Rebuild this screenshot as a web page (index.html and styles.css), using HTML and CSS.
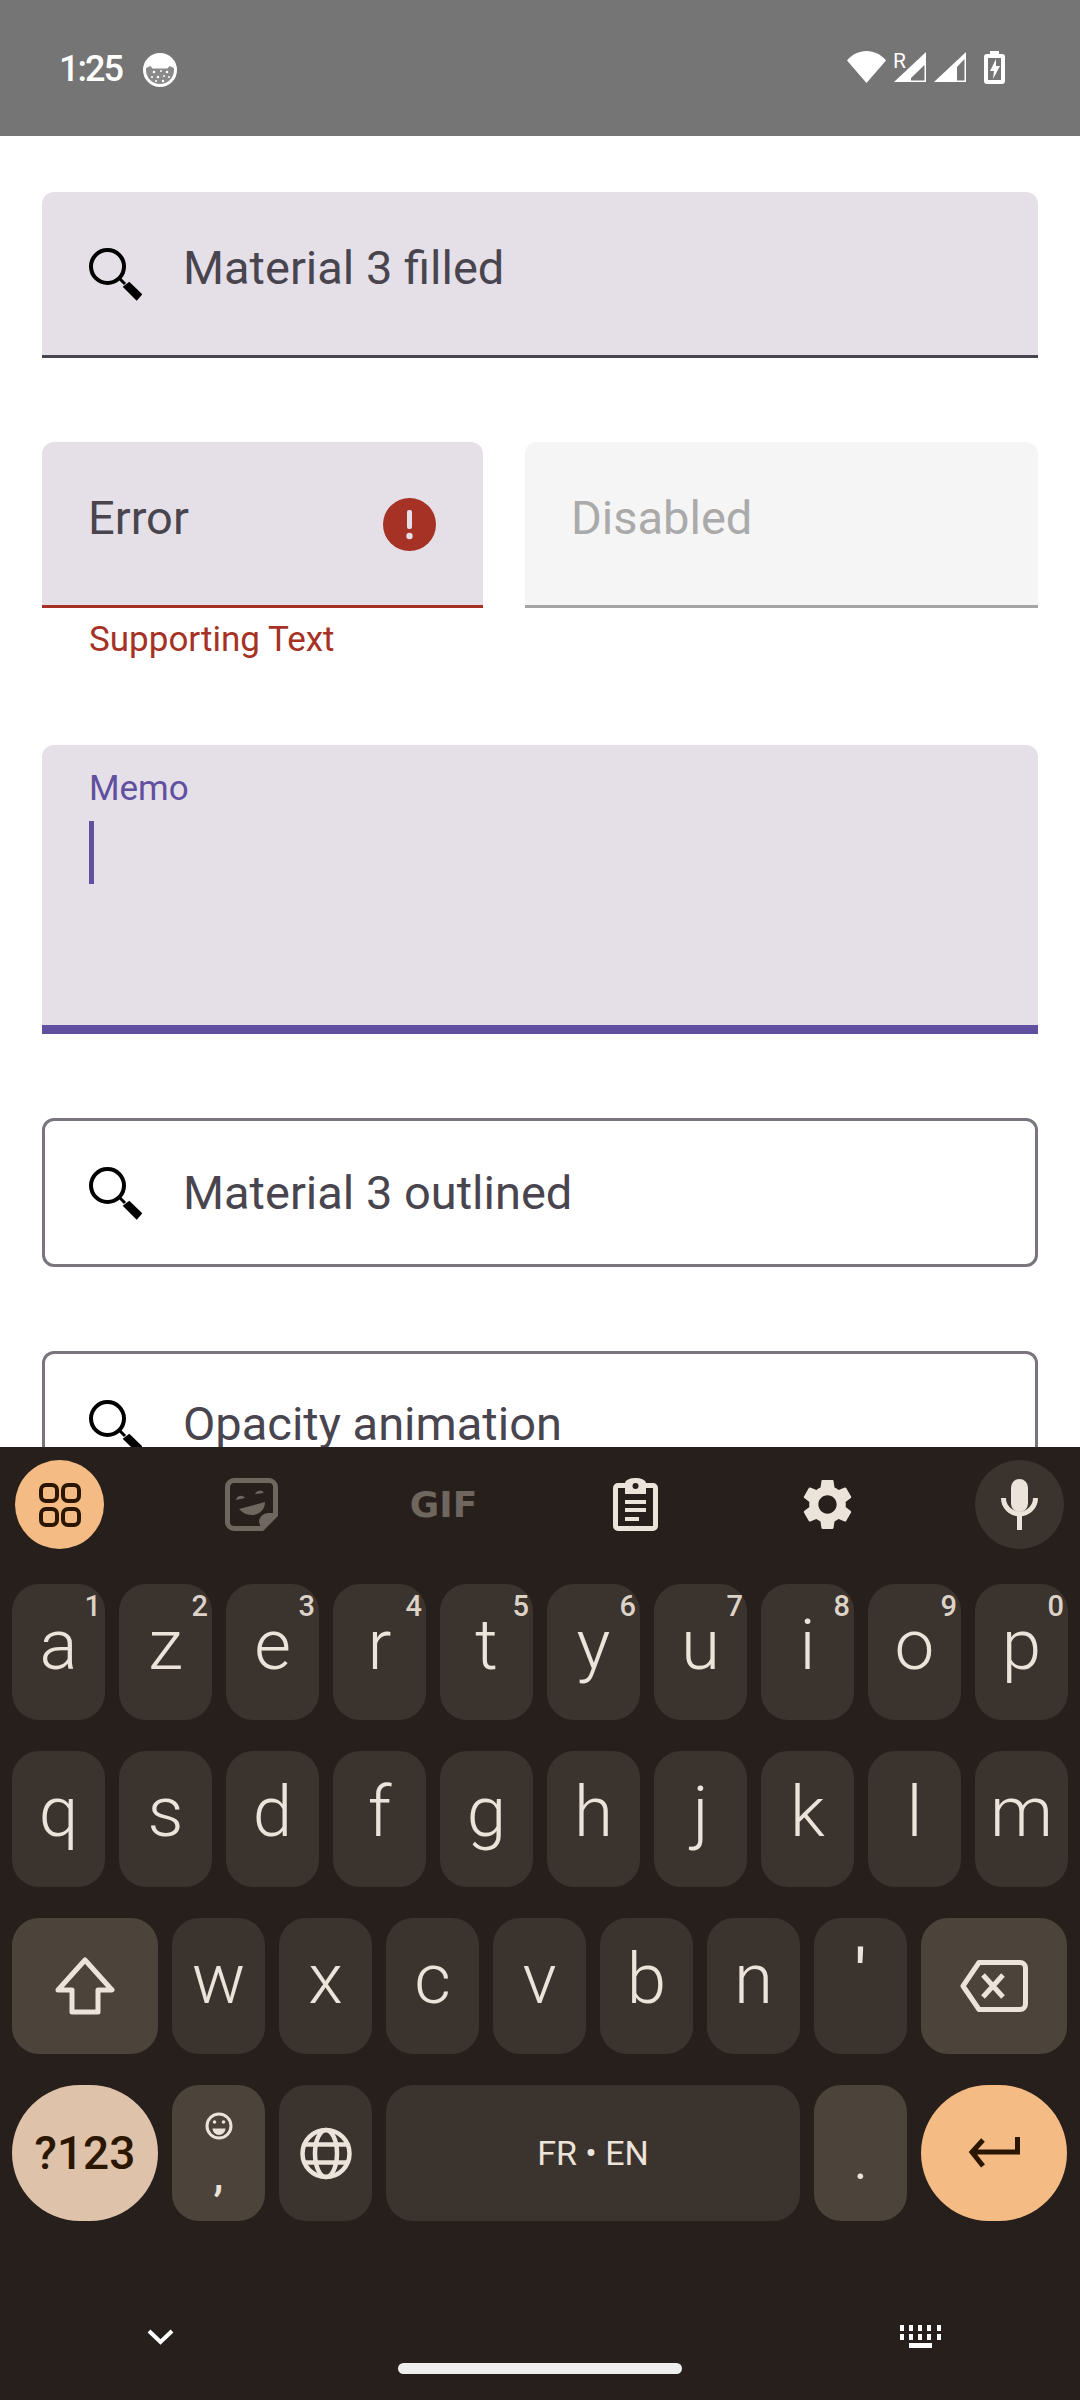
FILE: index.html
```html
<!DOCTYPE html>
<html lang="en">
<head>
  <meta charset="UTF-8" />
  <title>Material 3 text fields</title>
  <link rel="stylesheet" href="styles.css">
</head>
<body>

  <div class="status-bar">
    <span class="clock">1:25</span>
    <svg class="cat-icon" width="34" height="34" viewBox="0 0 34 34">
      <circle cx="17" cy="17" r="15.500" fill="#8a8a8a" stroke="#fff" stroke-width="3"/>
      <path d="M4 9a16 16 0 0 1 26 0l1 6-4.500-2-2 2.500h-15l-2-2.500L3 15z" fill="#fff"/>
      <g fill="#fff">
        <circle cx="11" cy="19" r="1.300"/><circle cx="18" cy="18" r="1"/><circle cx="24" cy="19" r="1.300"/>
        <circle cx="9" cy="24" r="1"/><circle cx="15" cy="24" r="1.300"/><circle cx="21" cy="23" r="1"/>
        <circle cx="26" cy="24" r="1"/><circle cx="13" cy="28" r="1"/><circle cx="20" cy="28" r="1.200"/>
      </g>
    </svg>
    <div class="status-right">
      <svg width="39" height="32" viewBox="0 0 39 32"><path d="M0 9.500C5 3.500 12 0 19.500 0S34 3.500 39 9.500L19.500 32z" fill="#fff"/></svg>
      <span class="roam">
        <svg width="34" height="32" viewBox="0 0 34 32"><path d="M33 1v30H1z" fill="#fff"/><path d="M18 29.500h13.500V14L18 27z" fill="#757575"/></svg>
        <span class="roam-r">R</span>
      </span>
      <svg width="34" height="32" viewBox="0 0 34 32"><path d="M33 1v30H1z" fill="#fff"/><path d="M24 29.500h7.500V8l-7.500 8z" fill="#757575"/></svg>
      <svg class="battery" width="21" height="33" viewBox="0 0 21 33">
        <path d="M6 0h9v3h3a3 3 0 0 1 3 3v24a3 3 0 0 1-3 3H3a3 3 0 0 1-3-3V6a3 3 0 0 1 3-3h3z" fill="#fff"/>
        <path d="M4 7h13v22H4z" fill="#757575"/>
        <path d="M12 8l-6 12h4l-1 8 7-13h-4z" fill="#fff"/>
      </svg>
    </div>
  </div>

  <div class="content">
    <div class="field filled">
      <svg class="search-icon" width="53" height="53" viewBox="0 0 53 53"><circle cx="18.500" cy="18.500" r="16.500" fill="none" stroke="#000" stroke-width="4"/><path d="M30 30l6 6" stroke="#000" stroke-width="3"/><path d="M33.700 38.700l6.600-5 13 12.600-5.600 6.400z" fill="#000"/></svg>
      <span class="field-text">Material 3 filled</span>
    </div>

    <div class="field-row">
      <div class="error-col">
        <div class="field filled error">
          <span class="field-text">Error</span>
          <svg class="error-icon" width="53" height="53" viewBox="0 0 53 53">
            <circle cx="26.500" cy="26.500" r="26.500" fill="#a53224"/>
            <rect x="24" y="12" width="5" height="19" rx="2" fill="#e5e0e8"/>
            <circle cx="26.500" cy="38" r="3.200" fill="#e5e0e8"/>
          </svg>
        </div>
        <div class="supporting">Supporting Text</div>
      </div>
      <div class="field filled disabled">
        <span class="field-text">Disabled</span>
      </div>
    </div>

    <div class="field filled memo">
      <div class="memo-label">Memo</div>
      <div class="caret"></div>
    </div>

    <div class="field outlined">
      <svg class="search-icon" width="53" height="53" viewBox="0 0 53 53"><circle cx="18.500" cy="18.500" r="16.500" fill="none" stroke="#000" stroke-width="4"/><path d="M30 30l6 6" stroke="#000" stroke-width="3"/><path d="M33.700 38.700l6.600-5 13 12.600-5.600 6.400z" fill="#000"/></svg>
      <span class="field-text">Material 3 outlined</span>
    </div>

    <div class="field outlined scrolled">
      <svg class="search-icon" width="53" height="53" viewBox="0 0 53 53"><circle cx="18.500" cy="18.500" r="16.500" fill="none" stroke="#000" stroke-width="4"/><path d="M30 30l6 6" stroke="#000" stroke-width="3"/><path d="M33.700 38.700l6.600-5 13 12.600-5.600 6.400z" fill="#000"/></svg>
      <span class="field-text">Opacity animation</span>
    </div>
  </div>

  <div class="keyboard">
    <div class="toolbar">
      <div class="tool tool-accent">
        <svg width="44" height="44" viewBox="0 0 44 44" fill="none" stroke="#2b1700" stroke-width="4">
          <rect x="3" y="2" width="16" height="16" rx="5"/><rect x="25" y="2" width="16" height="16" rx="5"/>
          <rect x="3" y="26" width="16" height="16" rx="5"/><rect x="25" y="26" width="16" height="16" rx="5"/>
        </svg>
      </div>
      <div class="tool">
        <svg width="53" height="53" viewBox="0 0 53 53">
          <path d="M9 2.500h35a6.500 6.500 0 0 1 6.500 6.500v28L37 50.500H9A6.500 6.500 0 0 1 2.500 44V9A6.500 6.500 0 0 1 9 2.500z" fill="none" stroke="#6e665f" stroke-width="5"/>
          <path d="M36 50l15-15h-8a9 9 0 0 0-9 9z" fill="#6e665f"/>
          <path d="M11 22a5 5 0 0 1 9-2zM30 16a5 5 0 0 1 9-1zM14 31l26-7c0 8-6 13-13 13-6 0-10-3-13-6z" fill="#6e665f"/>
        </svg>
      </div>
      <div class="tool"><span class="gif">GIF</span></div>
      <div class="tool">
        <svg width="45" height="53" viewBox="0 0 45 53" fill="#ece3da">
          <path d="M5 5h7a10.500 5 0 0 1 21 0h7a5 5 0 0 1 5 5v38a5 5 0 0 1-5 5H5a5 5 0 0 1-5-5V10a5 5 0 0 1 5-5zm0 5v38h35V10h-7v6H12v-6z" fill-rule="evenodd"/>
          <circle cx="22.500" cy="8" r="3" fill="#261f1b"/>
          <path d="M12 22h21v4H12zM12 30h21v4H12zM12 39h14v4H12z"/>
        </svg>
      </div>
      <div class="tool">
        <svg width="61" height="61" viewBox="0 0 24 24"><path fill="#ece3da" d="M19.140 12.940c.04-.3.06-.61.06-.94 0-.32-.02-.64-.07-.94l2.030-1.580c.18-.14.23-.41.12-.61l-1.920-3.320c-.12-.22-.37-.29-.59-.22l-2.390.96c-.5-.38-1.030-.7-1.620-.94l-.36-2.540c-.04-.24-.24-.41-.48-.41h-3.840c-.24 0-.43.17-.47.41l-.36 2.540c-.59.24-1.130.57-1.620.94l-2.390-.96c-.22-.08-.47 0-.59.22L2.740 8.870c-.12.21-.08.47.12.61l2.030 1.580c-.05.3-.09.63-.09.94s.02.64.07.94l-2.030 1.580c-.18.14-.23.41-.12.61l1.920 3.320c.12.22.37.29.59.22l2.390-.96c.5.38 1.030.7 1.620.94l.36 2.540c.05.24.24.41.48.41h3.840c.24 0 .44-.17.47-.41l.36-2.540c.59-.24 1.130-.56 1.620-.94l2.390.96c.22.08.47 0 .59-.22l1.920-3.320c.12-.22.07-.47-.12-.61l-2.010-1.580zM12 15.600c-1.980 0-3.600-1.620-3.600-3.600s1.620-3.600 3.600-3.600 3.600 1.620 3.600 3.600-1.620 3.600-3.600 3.600z"/></svg>
      </div>
      <div class="tool tool-mic">
        <svg width="37" height="51" viewBox="0 0 37 51">
          <rect x="10" y="0" width="17" height="33" rx="8.500" fill="#ece3da"/>
          <path d="M2.500 19a16 16 0 0 0 32 0" fill="none" stroke="#ece3da" stroke-width="5"/>
          <rect x="16" y="36" width="5" height="15" fill="#ece3da"/>
        </svg>
      </div>
    </div>

    <div class="key-row">
      <div class="key">a<sup class="hint">1</sup></div>
      <div class="key">z<sup class="hint">2</sup></div>
      <div class="key">e<sup class="hint">3</sup></div>
      <div class="key">r<sup class="hint">4</sup></div>
      <div class="key">t<sup class="hint">5</sup></div>
      <div class="key">y<sup class="hint">6</sup></div>
      <div class="key">u<sup class="hint">7</sup></div>
      <div class="key">i<sup class="hint">8</sup></div>
      <div class="key">o<sup class="hint">9</sup></div>
      <div class="key">p<sup class="hint">0</sup></div>
    </div>
    <div class="key-row">
      <div class="key">q</div>
      <div class="key">s</div>
      <div class="key">d</div>
      <div class="key">f</div>
      <div class="key">g</div>
      <div class="key">h</div>
      <div class="key">j</div>
      <div class="key">k</div>
      <div class="key">l</div>
      <div class="key">m</div>
    </div>
    <div class="key-row">
      <div class="key wide fn centered">
        <svg width="60" height="58" viewBox="0 0 60 58"><path d="M30 3L57 33H43v22H17V33H3z" fill="none" stroke="#ece3da" stroke-width="5" stroke-linejoin="round"/></svg>
      </div>
      <div class="key">w</div>
      <div class="key">x</div>
      <div class="key">c</div>
      <div class="key">v</div>
      <div class="key">b</div>
      <div class="key">n</div>
      <div class="key apos">'</div>
      <div class="key wide fn centered">
        <svg width="68" height="52" viewBox="0 0 68 52" fill="none" stroke="#ece3da" stroke-width="5"><path d="M19 2.500h41a5.500 5.500 0 0 1 5.500 5.500v36a5.500 5.500 0 0 1-5.500 5.500H19L3 26z" stroke-linejoin="round"/><path d="M23 15l20 22M43 15L23 37"/></svg>
      </div>
    </div>
    <div class="key-row">
      <div class="key wide pill-tan centered sym">?123</div>
      <div class="key fn comma">
        <svg width="28" height="30" viewBox="0 0 28 30" fill="none" stroke="#ece3da" stroke-width="3"><circle cx="14" cy="15" r="12"/><circle cx="9.500" cy="11" r="1.800" fill="#ece3da" stroke="none"/><circle cx="18.500" cy="11" r="1.800" fill="#ece3da" stroke="none"/><path d="M7.500 17.500h13a6.500 6.500 0 0 1-13 0z" fill="#ece3da" stroke="none"/></svg>
        <span class="comma-char">,</span>
      </div>
      <div class="key centered">
        <svg width="52" height="53" viewBox="0 0 52 53" fill="none" stroke="#ece3da" stroke-width="4.500"><circle cx="26" cy="26.500" r="23.500"/><ellipse cx="26" cy="26.500" rx="11" ry="23.500"/><path d="M5 17.500h42M5 35.500h42"/></svg>
      </div>
      <div class="key space centered">FR • EN</div>
      <div class="key fn period">.</div>
      <div class="key wide pill-accent centered">
        <svg width="52" height="32" viewBox="0 0 52 32" fill="none" stroke="#2b1700" stroke-width="5"><path d="M49.500 0v15H5M15 3L4 15l11 14"/></svg>
      </div>
    </div>

    <div class="nav-bar">
      <svg width="27" height="16" viewBox="0 0 27 16"><path d="M2 2l11.500 11L25 2" fill="none" stroke="#fff" stroke-width="4"/></svg>
      <svg width="41" height="24" viewBox="0 0 41 24" fill="#fff">
        <path d="M0 0h4v8H0zM9 0h4v8H9zM18 0h4v8h-4zM27 0h4v8h-4zM37 0h4v8h-4zM0 12h4v8H0zM9 12h4v8H9zM18 12h4v8h-4zM27 12h4v8h-4zM37 12h4v8h-4z" transform="scale(1 .75)"/>
        <path d="M9 18h23v5H9z"/>
      </svg>
    </div>
    <div class="home-bar"></div>
  </div>

</body>
</html>
```

FILE: styles.css
```css
* {
  margin: 0;
  padding: 0;
  box-sizing: border-box;
}

body {
  width: 1080px;
  height: 2400px;
  overflow: hidden;
  display: flex;
  flex-direction: column;
  background: #fff;
  font-family: 'Roboto', sans-serif;
}

/* status bar */
.status-bar {
  height: 136px;
  flex-shrink: 0;
  background: #757575;
  color: #fff;
  display: flex;
  align-items: flex-start;
  padding: 51px 75px 0 59px;
}

.clock {
  font-size: 36px;
  font-weight: 500;
  line-height: 36px;
  letter-spacing: -2px;
}

.cat-icon {
  margin: 2px 0 0 21px;
}

.status-right {
  margin-left: auto;
  display: flex;
  gap: 6px;
  align-items: flex-start;
}

.roam {
  position: relative;
  display: block;
  height: 32px;
  margin-left: 1px;
}

.roam-r {
  position: absolute;
  left: 0;
  top: 0;
  font-size: 21px;
  line-height: 21px;
  color: #fff;
}

.battery {
  margin-left: 11px;
}

/* fields */
.content {
  height: 1311px;
  flex-shrink: 0;
  overflow: hidden;
  padding: 56px 42px 0;
}

.field {
  display: flex;
  align-items: flex-start;
  font-size: 47px;
  line-height: 56px;
  color: #49454f;
}

.field-text {
  margin-top: 1px;
}

.filled {
  background: #e5e0e8;
  border-radius: 12px 12px 0 0;
  border-bottom: 3px solid #49454f;
  height: 166px;
  padding: 47px 47px 0 47px;
}

.field .search-icon {
  flex-shrink: 0;
  margin-top: 9px;
  margin-right: 41px;
}

.field-row {
  display: flex;
  gap: 42px;
  margin-top: 84px;
}

.error-col {
  width: 441px;
  flex-shrink: 0;
}

.error {
  justify-content: space-between;
  border-bottom-color: #a53224;
  padding-left: 46px;
}

.error-icon {
  margin-top: 9px;
}

.supporting {
  font-size: 35px;
  line-height: 42px;
  color: #a53224;
  padding: 11px 0 0 47px;
}

.disabled {
  flex: 1;
  background: #f5f5f5;
  border-bottom-color: #a5a5a5;
  color: #aaa;
  padding-left: 46px;
}

.memo {
  display: block;
  margin-top: 84px;
  height: 289px;
  padding: 23px 47px 0;
  border-bottom: 9px solid #6150a0;
}

.memo-label {
  font-size: 35px;
  line-height: 42px;
  color: #6150a0;
}

.caret {
  width: 5px;
  height: 63px;
  margin-top: 11px;
  background: #6150a0;
}

.outlined {
  margin-top: 84px;
  height: 149px;
  border: 3px solid #79747e;
  border-radius: 12px;
  padding: 43px 47px 0 44px;
}

.outlined .search-icon {
  margin-top: 3px;
}

.scrolled .field-text {
  margin-top: -1px;
}

/* keyboard */
.keyboard {
  flex: 1;
  background: #261f1b;
  color: #ece3da;
  display: flex;
  flex-direction: column;
  padding-top: 13px;
}

.toolbar {
  display: flex;
  justify-content: space-between;
  padding: 0 16px 0 15px;
  margin-bottom: 35px;
}

.tool {
  width: 89px;
  height: 89px;
  border-radius: 50%;
  display: flex;
  align-items: center;
  justify-content: center;
}

.tool-accent {
  background: #f4bb84;
}

.tool-mic {
  background: #3b332e;
}

.gif {
  font-family: 'DejaVu Sans', sans-serif;
  font-weight: 700;
  font-size: 36px;
  color: #6e665f;
}

.key-row {
  display: flex;
  gap: 14px;
  padding: 0 12px;
  height: 136px;
  margin-bottom: 31px;
}

.key {
  position: relative;
  width: 93px;
  height: 136px;
  flex-shrink: 0;
  background: #3b332e;
  border-radius: 27px;
  font-size: 71px;
  font-weight: 350;
  line-height: 80px;
  text-align: center;
  padding-top: 21px;
}

.hint {
  position: absolute;
  top: 6px;
  right: 4px;
  font-size: 29px;
  font-weight: 500;
  line-height: 33px;
  color: #dcd2c8;
}

.centered {
  display: flex;
  align-items: center;
  justify-content: center;
  padding-top: 0;
}

.wide {
  width: 146px;
}

.fn {
  background: #4c433a;
}

.apos {
  font-weight: 400;
  line-height: 72px;
}

.sym {
  font-size: 46px;
  font-weight: 500;
  color: #2b1700;
}

.pill-tan {
  background: #dfc2aa;
  border-radius: 68px;
}

.pill-accent {
  background: #f4bb84;
  border-radius: 68px;
}

.comma {
  display: flex;
  flex-direction: column;
  align-items: center;
  padding-top: 26px;
}

.comma-char {
  font-size: 44px;
  font-weight: 500;
  line-height: 40px;
  margin-top: 14px;
}

.space {
  width: 414px;
  font-size: 34px;
  font-weight: 400;
  line-height: 40px;
}

.period {
  font-size: 50px;
  font-weight: 400;
  line-height: 56px;
  padding-top: 49px;
}

.nav-bar {
  display: flex;
  justify-content: space-between;
  align-items: center;
  padding: 0 139px 0 147px;
  margin-top: 73px;
}

.home-bar {
  width: 284px;
  height: 11px;
  margin: 14px auto 0;
  border-radius: 6px;
  background: #eee;
}
```
